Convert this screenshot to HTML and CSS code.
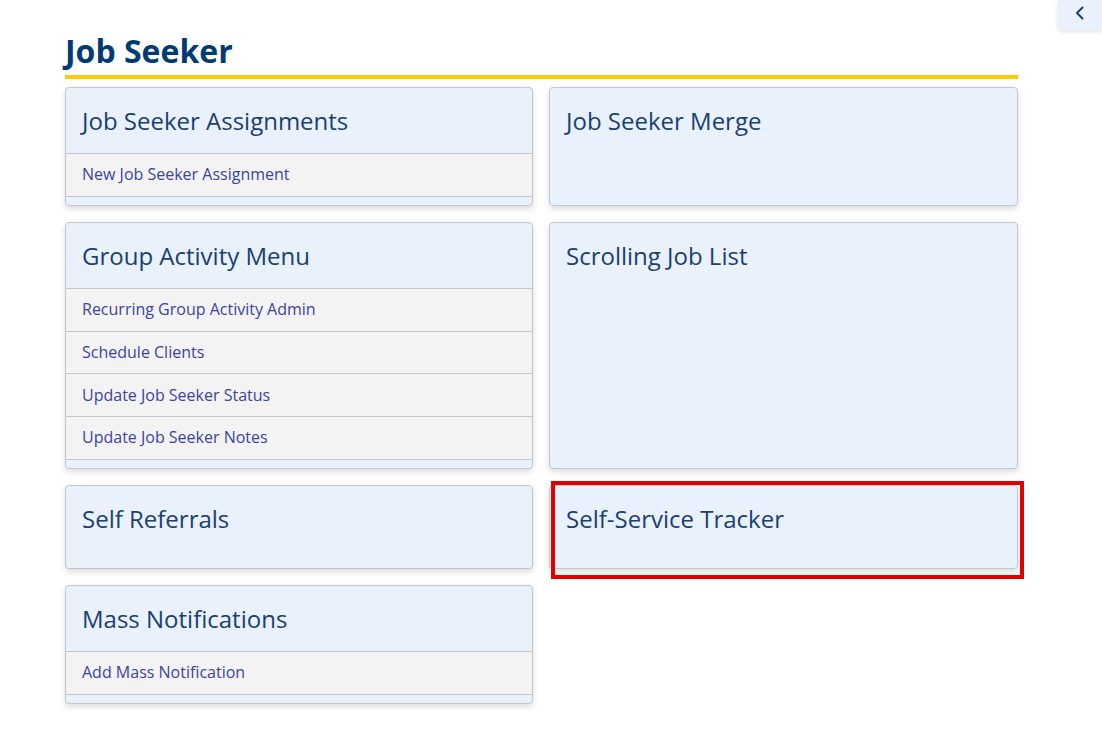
FILE: index.html
```html
<!DOCTYPE html>
<html lang="en">
<head>
<meta charset="utf-8">
<title>Job Seeker</title>
<link rel="stylesheet" href="styles.css">
</head>
<body>
<button class="collapse-btn" aria-label="Collapse">
  <svg width="12" height="14" viewBox="0 0 12 14"><path d="M8.5 1.5 L3 7 L8.5 12.5" fill="none" stroke="#1b3f73" stroke-width="2" stroke-linecap="round" stroke-linejoin="round"/></svg>
</button>
<main class="page">
  <h1 class="page-title">Job Seeker</h1>
  <div class="grid">
    <section class="card">
      <h2 class="card-head">Job Seeker Assignments</h2>
      <ul class="card-links">
        <li><a href="#">New Job Seeker Assignment</a></li>
      </ul>
      <div class="card-foot"></div>
    </section>
    <section class="card">
      <h2 class="card-head">Job Seeker Merge</h2>
    </section>
    <section class="card">
      <h2 class="card-head">Group Activity Menu</h2>
      <ul class="card-links">
        <li><a href="#">Recurring Group Activity Admin</a></li>
        <li><a href="#">Schedule Clients</a></li>
        <li><a href="#">Update Job Seeker Status</a></li>
        <li><a href="#">Update Job Seeker Notes</a></li>
      </ul>
      <div class="card-foot"></div>
    </section>
    <section class="card">
      <h2 class="card-head">Scrolling Job List</h2>
    </section>
    <section class="card card-empty">
      <h2 class="card-head">Self Referrals</h2>
    </section>
    <section class="card card-empty card-marked">
      <h2 class="card-head">Self-Service Tracker</h2>
      <div class="highlight"></div>
    </section>
    <section class="card">
      <h2 class="card-head">Mass Notifications</h2>
      <ul class="card-links">
        <li><a href="#">Add Mass Notification</a></li>
      </ul>
      <div class="card-foot"></div>
    </section>
  </div>
</main>
</body>
</html>
```
FILE: styles.css
```css
* { box-sizing: border-box; }
html, body { margin: 0; padding: 0; background: #ffffff; }
body {
  font-family: "Open Sans", "Noto Sans", sans-serif;
  color: #1b3f73;
  position: relative;
  min-height: 752px;
}
.collapse-btn {
  position: absolute;
  top: 0;
  right: 0;
  width: 44px;
  height: 30px;
  border: none;
  padding: 0;
  background: #e8f1fc;
  border-bottom-left-radius: 5px;
  box-shadow: 0 2px 5px rgba(0,0,0,0.12);
  display: flex;
  align-items: center;
  justify-content: center;
}
.collapse-btn svg { margin-top: -4px; }
.page {
  padding: 33px 0 40px 65px;
  width: 1018px;
}
.page-title {
  margin: 0;
  font-size: 32px;
  line-height: 36px;
  font-weight: 700;
  color: #003b73;
  padding-bottom: 6px;
  border-bottom: 4px solid #fccb00;
}
.grid {
  margin-top: 8px;
  display: grid;
  grid-template-columns: 468px 469px;
  column-gap: 16px;
  row-gap: 16px;
}
.card {
  position: relative;
  background: #e8f1fc;
  border: 1px solid #c3c7cc;
  border-radius: 4px;
  box-shadow: 0 3px 6px rgba(0,0,0,0.14);
  display: flex;
  flex-direction: column;
}
.card-head {
  margin: 0;
  height: 65px;
  padding: 0 16px;
  display: flex;
  align-items: center;
  font-size: 24px;
  font-weight: 400;
  color: #1b3f73;
}
.card-links {
  list-style: none;
  margin: 0;
  padding: 0;
  background: #f3f3f3;
}
.card-links li {
  border-top: 1px solid #c3c7cc;
  padding: 8.33px 16px 9.33px;
  line-height: 24px;
  font-size: 16px;
}
.card-links a {
  color: #3c43a3;
  text-decoration: none;
}
.card-foot {
  height: 9.33px;
  border-top: 1px solid #c3c7cc;
}
.card-empty { min-height: 84px; }
.highlight {
  position: absolute;
  left: 1px;
  top: -5px;
  width: 473px;
  height: 98px;
  border: 4px solid #e00000;
  pointer-events: none;
}
```
